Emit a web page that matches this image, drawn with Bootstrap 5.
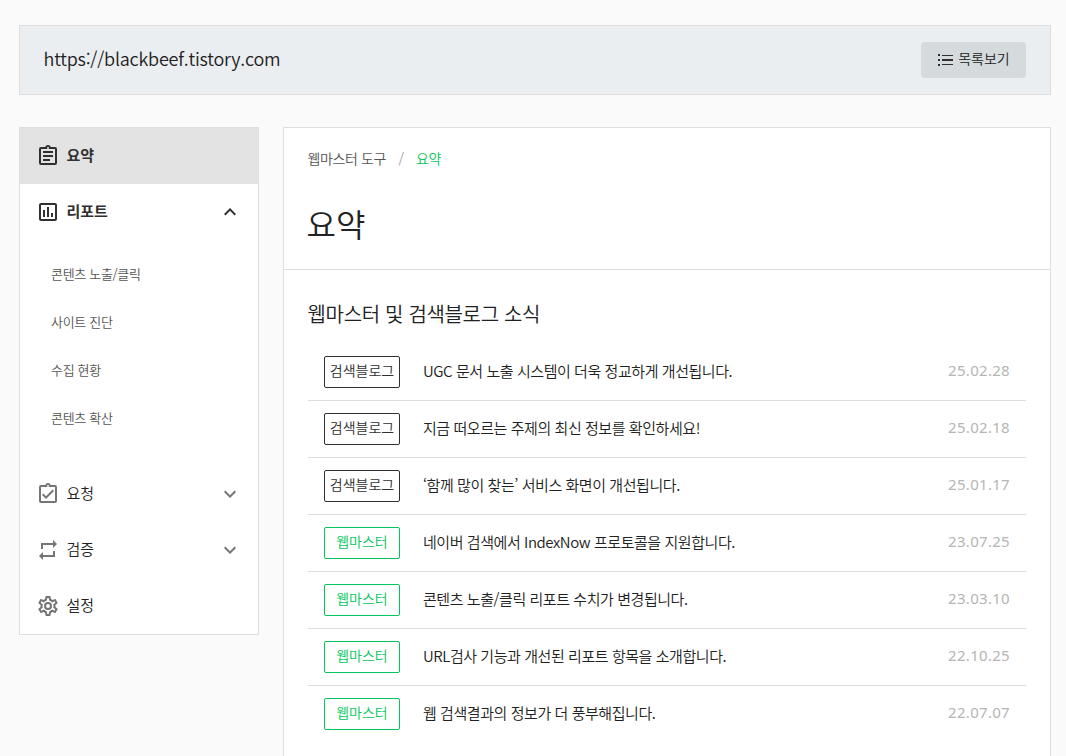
<!DOCTYPE html>
<html lang="ko">
<head>
<meta charset="utf-8">
<meta name="viewport" content="width=device-width, initial-scale=1">
<title>웹마스터 도구</title>
<link href="https://cdn.jsdelivr.net/npm/bootstrap@5.3.0/dist/css/bootstrap.min.css" rel="stylesheet">
<style>
body{background:#fafafa;color:#212121;font-family:"Noto Sans CJK KR",sans-serif;font-size:14px;height:756px;overflow:hidden}
.page{padding:25px 15px 0 19px}
.site-bar{height:70px;background:#eaeef1;border:1px solid #dedede;padding:0 24px 0 23px}
.site-url{font-size:18px;font-weight:350;line-height:24px;margin-top:-5px;margin-left:.5px;letter-spacing:-.2px}
.list-btn{width:105px;height:36px;background:#d5dadd;border-radius:4px;font-size:14px;font-weight:350;color:#212121;padding:0 0 3px;gap:5px}
.list-btn svg{margin-top:3px}
.side{width:240px;height:508px;border:1px solid #dedede;background:#fff}
.side-item{height:56px;padding:0 16px 0 15.600px;font-size:15px;font-weight:350;color:#212121}
.side-item svg{fill:#757575}
.side-item span{margin-left:6.900px;padding-bottom:2px}
.side-item.strong{font-weight:700;color:#303030}
.side-item.strong svg{fill:#303030}
.side-item.strong span{padding-bottom:2px}
.side-item.active{background:#e3e3e3}
.sub-menu{padding:10px 0 24px 31px}
.sub-menu a{display:flex;align-items:center;height:48px;font-size:13px;font-weight:350;color:#555;text-decoration:none;letter-spacing:-.32px}
.main{height:660px;border:1px solid #dedede;background:#fff;min-width:0}
.main-head{height:142px;border-bottom:1px solid #dedede;padding:19px 24px 0 23.500px}
.crumbs{font-size:14px;line-height:22px;font-weight:350;color:#555;gap:12.500px;letter-spacing:-.4px}
.slash{color:#9e9e9e}
.title{font-size:32px;font-weight:350;line-height:48px;margin:30px 0 0 -1px}
.section-title{font-size:20px;font-weight:350;line-height:30px;margin:29px 0 15px -.5px;letter-spacing:-.33px}
.news-row{height:57px;border-bottom:1px solid #dedede;padding:0 16px}
.news-row:last-child{border-color:transparent}
.tag{width:76px;height:32px;border:1px solid #303030;border-radius:2px;font-size:14px;font-weight:350;color:#303030;padding-bottom:3px}
.tag.green{border-color:#03c75a;color:#03c75a}
.green-text{color:#03c75a}
.news-title{font-size:15px;font-weight:350;margin-left:23px;letter-spacing:-.44px;padding-bottom:2px}
.date{font-family:"Noto Sans",sans-serif;font-size:15px;color:#b5b5b5;padding-bottom:4px;letter-spacing:.3px}
</style>
</head>
<body>
<div class="page">
  <header class="site-bar d-flex align-items-center justify-content-between">
    <div class="site-url">https://blackbeef.tistory.com</div>
    <button class="btn border-0 list-btn d-flex align-items-center justify-content-center">
      <svg width="16" height="16" viewBox="0 0 16 16" fill="#303030"><path d="M5 3h11v1H5zM5 7h11v2H5zM5 12h11v1H5zM1 2h2v2H1zM1 7h2v2H1zM1 12h2v2H1z"/></svg>
      <span>목록보기</span>
    </button>
  </header>
  <div class="d-flex align-items-start mt-4 pt-2 gap-4">
    <nav class="side flex-shrink-0">
      <div class="side-item strong active d-flex align-items-center">
        <svg width="24" height="24" viewBox="0 0 24 24"><path d="M19 3h-4.180C14.400 1.840 13.300 1 12 1s-2.400.84-2.820 2H5a2 2 0 0 0-2 2v14a2 2 0 0 0 2 2h14a2 2 0 0 0 2-2V5a2 2 0 0 0-2-2m-7 0a1 1 0 0 1 1 1 1 1 0 0 1-1 1 1 1 0 0 1-1-1 1 1 0 0 1 1-1M5 19V5h14v14zm2-12h10v2H7zm0 4h10v2H7zm0 4h7v2H7z"/></svg>
        <span>요약</span>
      </div>
      <div class="side-item strong d-flex align-items-center">
        <svg width="24" height="24" viewBox="0 0 24 24"><path d="M9 17H7v-7h2zm4 0h-2V7h2zm4 0h-2v-4h2zm2 2H5V5h14zm0-16H5a2 2 0 0 0-2 2v14a2 2 0 0 0 2 2h14a2 2 0 0 0 2-2V5a2 2 0 0 0-2-2"/></svg>
        <span>리포트</span>
        <svg class="ms-auto" width="24" height="24" viewBox="0 0 24 24"><path d="M7.410 15.410 12 10.830l4.590 4.580L18 14l-6-6-6 6z"/></svg>
      </div>
      <div class="sub-menu">
        <a href="#">콘텐츠 노출/클릭</a>
        <a href="#">사이트 진단</a>
        <a href="#">수집 현황</a>
        <a href="#">콘텐츠 확산</a>
      </div>
      <div class="side-item d-flex align-items-center">
        <svg width="24" height="24" viewBox="0 0 24 24"><path d="M19 3h-4.180C14.400 1.840 13.300 1 12 1s-2.400.84-2.820 2H5a2 2 0 0 0-2 2v14a2 2 0 0 0 2 2h14a2 2 0 0 0 2-2V5a2 2 0 0 0-2-2m-7 0a1 1 0 0 1 1 1 1 1 0 0 1-1 1 1 1 0 0 1-1-1 1 1 0 0 1 1-1M5 19V5h14v14zM16.590 7.580 10 14.170l-2.590-2.580L6 13l4 4 8-8z"/></svg>
        <span>요청</span>
        <svg class="ms-auto" width="24" height="24" viewBox="0 0 24 24"><path d="M7.410 8.580 12 13.170l4.590-4.590L18 10l-6 6-6-6z"/></svg>
      </div>
      <div class="side-item d-flex align-items-center">
        <svg width="24" height="24" viewBox="0 0 24 24"><path d="M17 17H7v-3l-4 4 4 4v-3h12v-6h-2M7 7h10v3l4-4-4-4v3H5v6h2z"/></svg>
        <span>검증</span>
        <svg class="ms-auto" width="24" height="24" viewBox="0 0 24 24"><path d="M7.410 8.580 12 13.170l4.590-4.590L18 10l-6 6-6-6z"/></svg>
      </div>
      <div class="side-item d-flex align-items-center">
        <svg width="24" height="24" viewBox="0 0 24 24"><path d="M12 8a4 4 0 0 1 4 4 4 4 0 0 1-4 4 4 4 0 0 1-4-4 4 4 0 0 1 4-4m0 2a2 2 0 0 0-2 2 2 2 0 0 0 2 2 2 2 0 0 0 2-2 2 2 0 0 0-2-2m-2 12c-.25 0-.46-.18-.5-.42l-.37-2.650c-.63-.25-1.170-.59-1.690-.99l-2.490 1.010c-.22.08-.49 0-.61-.22l-2-3.460a.493.493 0 0 1 .12-.64l2.110-1.660L4.500 12l.07-1-2.110-1.630a.493.493 0 0 1-.12-.64l2-3.460c.12-.22.39-.31.61-.22l2.490 1c.52-.39 1.060-.73 1.690-.98l.37-2.650c.04-.24.25-.42.5-.42h4c.25 0 .46.18.5.42l.37 2.650c.63.25 1.170.59 1.690.98l2.490-1c.22-.09.49 0 .61.22l2 3.460c.13.22.07.49-.12.64L19.430 11l.07 1-.07 1 2.110 1.630c.19.15.25.42.12.64l-2 3.460c-.12.22-.39.31-.61.22l-2.490-1c-.52.39-1.060.73-1.690.98l-.37 2.650c-.04.24-.25.42-.5.42zm1.250-18-.37 2.610c-1.200.25-2.260.89-3.030 1.780L5.440 7.350l-.75 1.300L6.800 10.200a5.550 5.550 0 0 0 0 3.600l-2.120 1.560.75 1.300 2.430-1.040c.77.88 1.820 1.520 3.010 1.760l.37 2.620h1.520l.37-2.610c1.190-.25 2.240-.89 3.010-1.770l2.430 1.040.75-1.300-2.120-1.550c.4-1.170.4-2.440 0-3.610l2.110-1.550-.75-1.300-2.410 1.040a5.420 5.420 0 0 0-3.030-1.770L12.750 4z"/></svg>
        <span>설정</span>
      </div>
    </nav>
    <main class="main flex-grow-1">
      <div class="main-head">
        <div class="crumbs d-flex"><span>웹마스터 도구</span><span class="slash">/</span><span class="green-text">요약</span></div>
        <h1 class="title">요약</h1>
      </div>
      <div class="px-4">
        <h2 class="section-title">웹마스터 및 검색블로그 소식</h2>
        <div>
          <div class="news-row d-flex align-items-center"><div class="tag d-flex align-items-center justify-content-center">검색블로그</div><div class="news-title">UGC 문서 노출 시스템이 더욱 정교하게 개선됩니다.</div><div class="date ms-auto">25.02.28</div></div>
          <div class="news-row d-flex align-items-center"><div class="tag d-flex align-items-center justify-content-center">검색블로그</div><div class="news-title">지금 떠오르는 주제의 최신 정보를 확인하세요!</div><div class="date ms-auto">25.02.18</div></div>
          <div class="news-row d-flex align-items-center"><div class="tag d-flex align-items-center justify-content-center">검색블로그</div><div class="news-title">‘함께 많이 찾는’ 서비스 화면이 개선됩니다.</div><div class="date ms-auto">25.01.17</div></div>
          <div class="news-row d-flex align-items-center"><div class="tag green d-flex align-items-center justify-content-center">웹마스터</div><div class="news-title">네이버 검색에서 IndexNow 프로토콜을 지원합니다.</div><div class="date ms-auto">23.07.25</div></div>
          <div class="news-row d-flex align-items-center"><div class="tag green d-flex align-items-center justify-content-center">웹마스터</div><div class="news-title">콘텐츠 노출/클릭 리포트 수치가 변경됩니다.</div><div class="date ms-auto">23.03.10</div></div>
          <div class="news-row d-flex align-items-center"><div class="tag green d-flex align-items-center justify-content-center">웹마스터</div><div class="news-title">URL검사 기능과 개선된 리포트 항목을 소개합니다.</div><div class="date ms-auto">22.10.25</div></div>
          <div class="news-row d-flex align-items-center"><div class="tag green d-flex align-items-center justify-content-center">웹마스터</div><div class="news-title">웹 검색결과의 정보가 더 풍부해집니다.</div><div class="date ms-auto">22.07.07</div></div>
        </div>
      </div>
    </main>
  </div>
</div>
<script src="https://cdn.jsdelivr.net/npm/bootstrap@5.3.0/dist/js/bootstrap.bundle.min.js"></script>
</body>
</html>
